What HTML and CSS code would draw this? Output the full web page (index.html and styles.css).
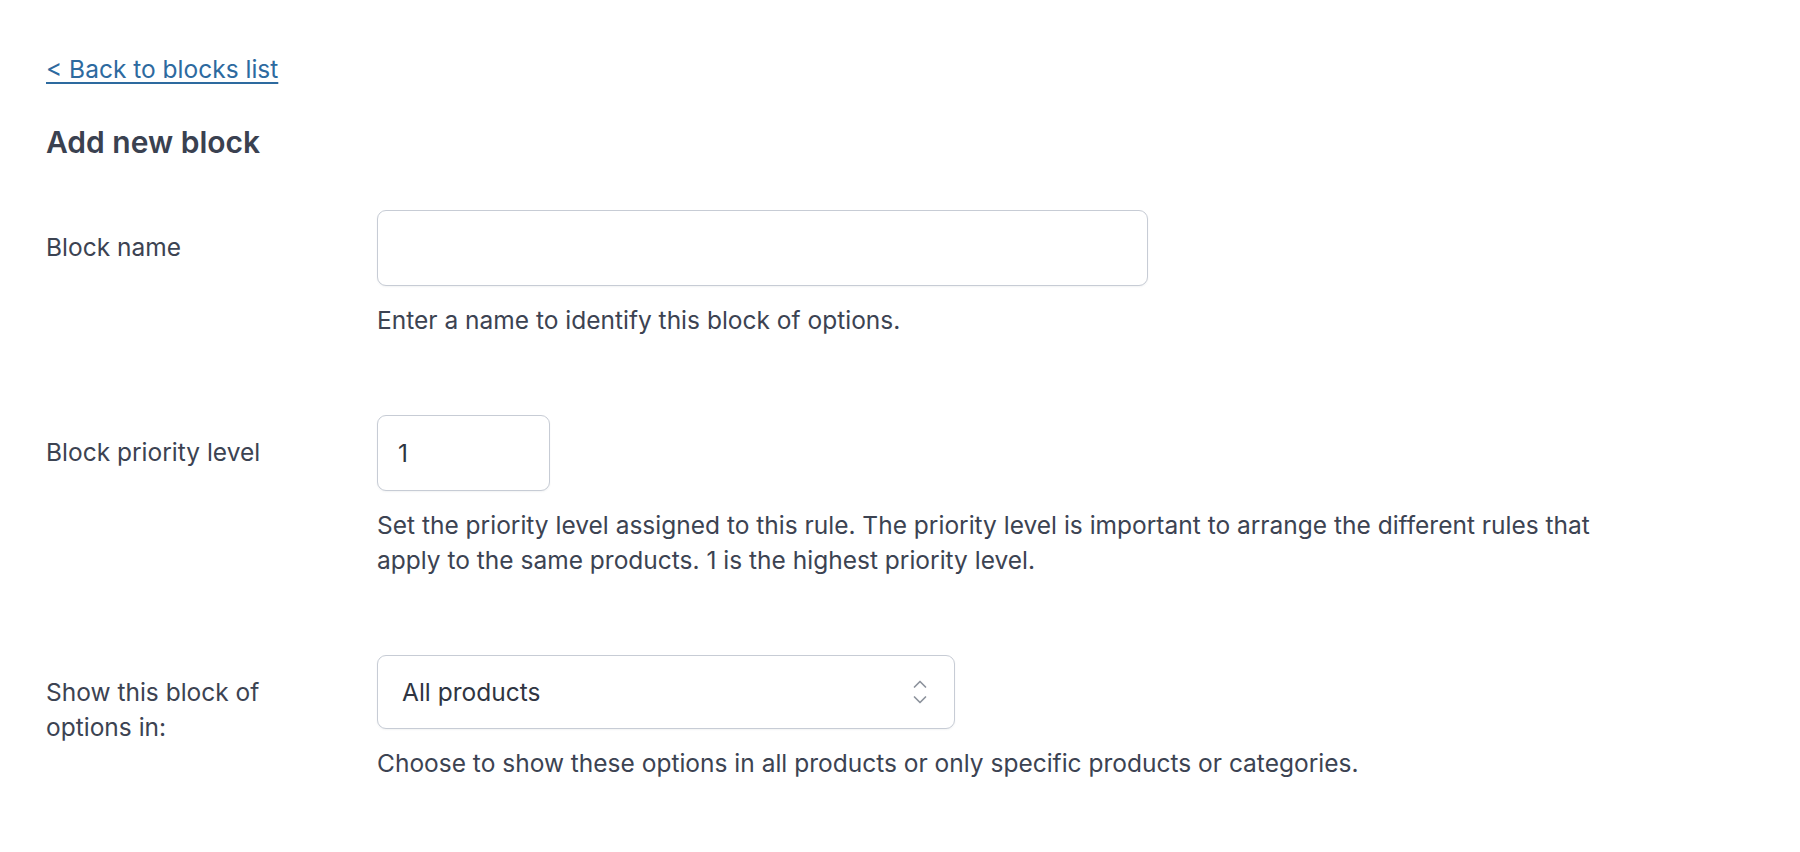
FILE: index.html
```html
<!DOCTYPE html>
<html lang="en">
<head>
<meta charset="utf-8">
<title>Add new block</title>
<link rel="stylesheet" href="styles.css">
</head>
<body>
<div class="page">
  <a class="back-link" href="#">&lt; Back to blocks list</a>
  <h1 class="page-title">Add new block</h1>
  <form class="block-form">
    <div class="form-row">
      <label class="field-label" for="block-name">Block name</label>
      <div class="field">
        <input class="text-input name-input" id="block-name" type="text">
        <p class="help">Enter a name to identify this block of options.</p>
      </div>
    </div>
    <div class="form-row">
      <label class="field-label" for="block-priority">Block priority level</label>
      <div class="field">
        <input class="text-input priority-input" id="block-priority" type="text" value="1">
        <p class="help">Set the priority level assigned to this rule. The priority level is important to arrange the different rules that apply to the same products. 1 is the highest priority level.</p>
      </div>
    </div>
    <div class="form-row">
      <label class="field-label narrow" for="block-show">Show this block of options in:</label>
      <div class="field">
        <div class="select-wrap">
          <select class="select-input" id="block-show">
            <option>All products</option>
            <option>Specific products</option>
            <option>Specific categories</option>
          </select>
          <svg class="select-arrows" width="16" height="26" viewBox="0 0 16 26" aria-hidden="true">
            <path d="M2.5 8 L8 2.5 L13.5 8" fill="none" stroke="#8d939d" stroke-width="1.7" stroke-linecap="round" stroke-linejoin="round"/>
            <path d="M2.5 18 L8 23.5 L13.5 18" fill="none" stroke="#8d939d" stroke-width="1.7" stroke-linecap="round" stroke-linejoin="round"/>
          </svg>
        </div>
        <p class="help">Choose to show these options in all products or only specific products or categories.</p>
      </div>
    </div>
  </form>
</div>
</body>
</html>
```

FILE: styles.css
```css
html, body {
  margin: 0;
  padding: 0;
  background: #ffffff;
}

body {
  font-family: Inter, "Noto Sans", "Liberation Sans", sans-serif;
  color: #3c4352;
  font-size: 24.5px;
}

.page {
  padding: 52px 0 0 46px;
}

.back-link {
  display: inline-block;
  font-size: 24.5px;
  line-height: 34px;
  color: #2d6a9f;
  text-decoration: underline;
  text-underline-offset: 4px;
  text-decoration-thickness: 1.5px;
}

.page-title {
  margin: 37px 0 0 0;
  font-size: 30px;
  line-height: 38px;
  font-weight: 600;
  color: #3a4150;
}

.block-form {
  margin-top: 49px;
  display: flex;
  flex-direction: column;
  gap: 77px;
}

.form-row {
  display: grid;
  grid-template-columns: 331px 1fr;
}

.field-label {
  padding-top: 20px;
  line-height: 35px;
  font-size: 24.5px;
  color: #3c4352;
}

.field-label.narrow {
  max-width: 250px;
  padding-top: 20px;
}

.field {
  display: flex;
  flex-direction: column;
  align-items: flex-start;
}

.text-input,
.select-input {
  box-sizing: border-box;
  height: 76px;
  border: 1.5px solid #c7ccd5;
  border-radius: 9px;
  background: #ffffff;
  font-family: inherit;
  font-size: 24.5px;
  color: #2f3542;
  padding: 0 20px;
  margin: 0;
  box-shadow: 0 1px 2px rgba(40, 50, 70, 0.06);
  outline: none;
}

.name-input {
  width: 771px;
}

.priority-input {
  width: 173px;
}

.select-wrap {
  position: relative;
  width: 578px;
}

.select-input {
  width: 578px;
  height: 74px;
  appearance: none;
  -webkit-appearance: none;
  padding: 0 60px 0 24px;
}

.select-arrows {
  position: absolute;
  right: 27px;
  top: 24px;
  pointer-events: none;
}

.help {
  margin: 17px 0 0 0;
  max-width: 1262px;
  line-height: 35px;
  font-size: 24.5px;
  color: #3c4352;
}
```
